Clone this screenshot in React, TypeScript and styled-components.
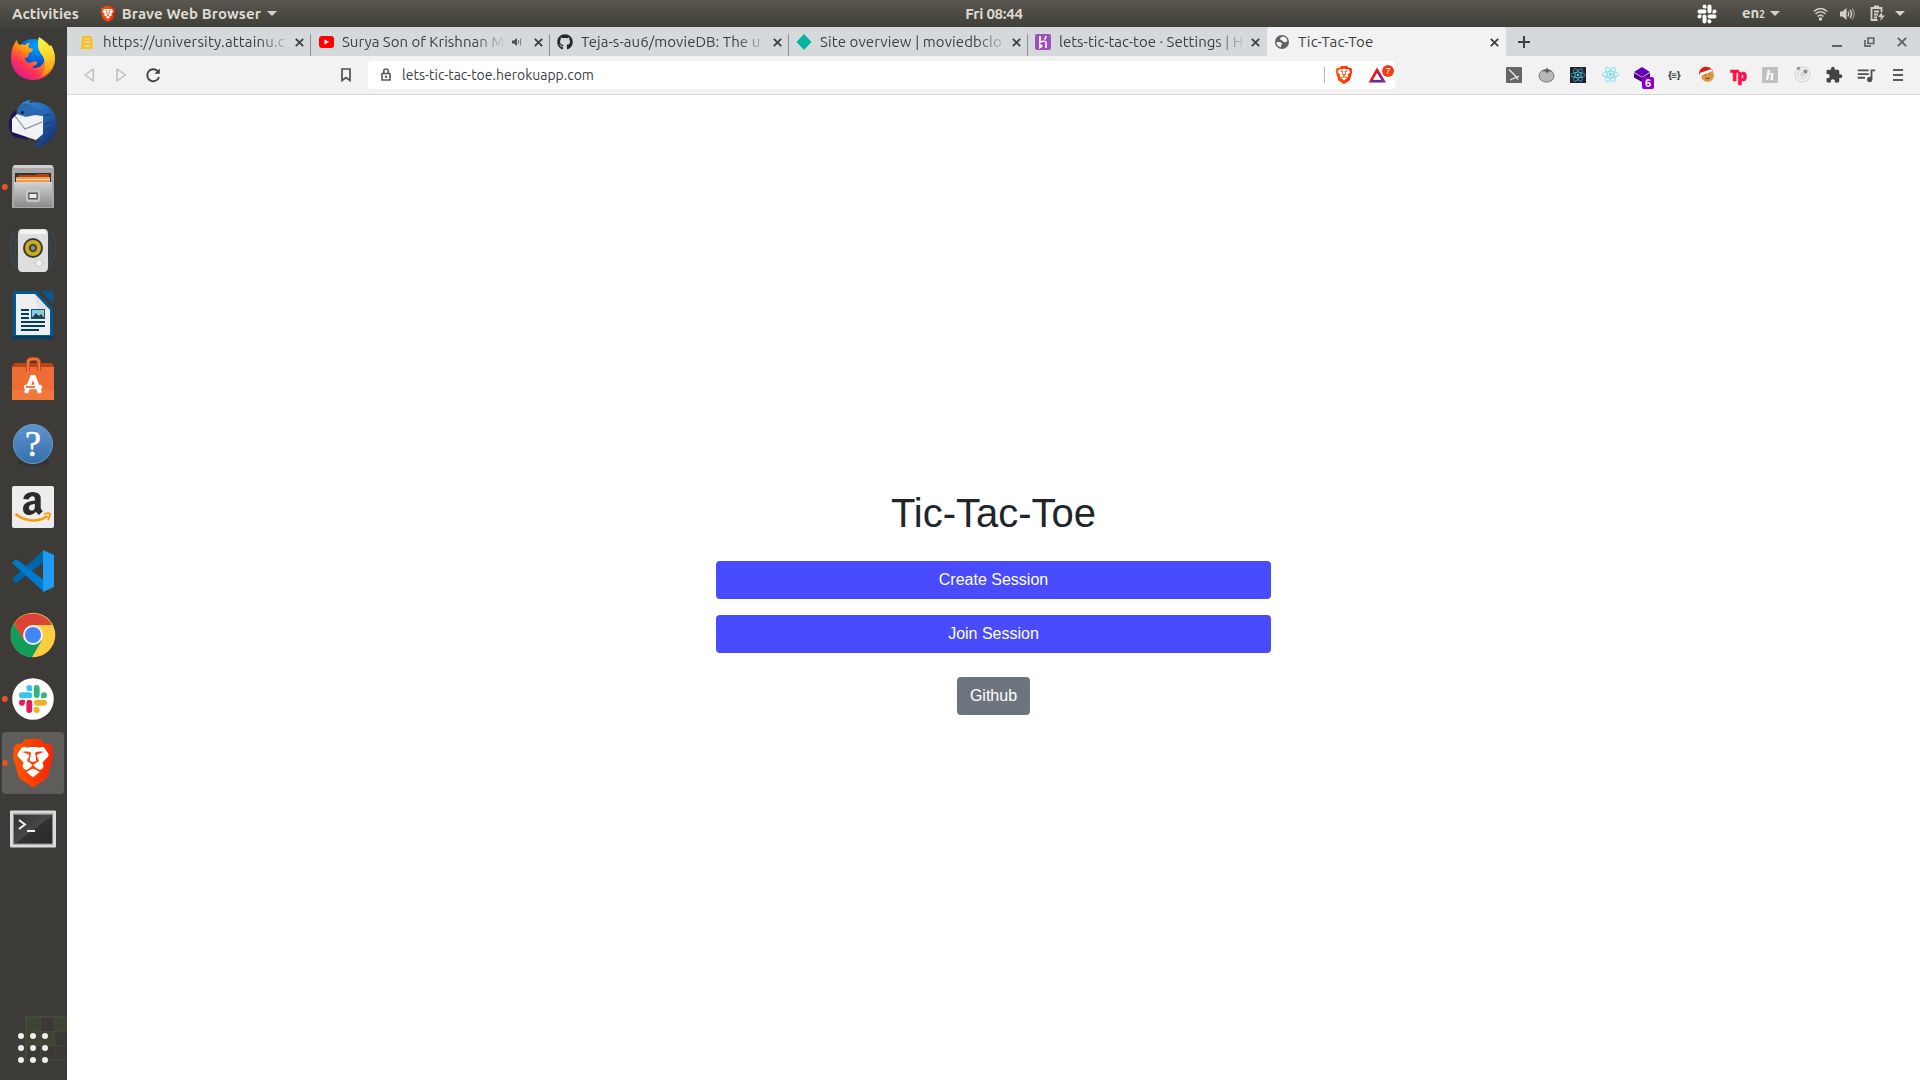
import React from "react";
import styled, { createGlobalStyle } from "styled-components";
import { FaGithub, FaReact, FaAmazon } from "react-icons/fa";
import { SiBrave } from "react-icons/si";
import { MdQueueMusic, MdExtension } from "react-icons/md";

const UI_FONT = '"Ubuntu", "Noto Sans", "Open Sans", sans-serif';

const GlobalStyle = createGlobalStyle`
  * { box-sizing: border-box; }
  body { margin: 0; background: #fff; overflow: hidden; }
  svg { display: block; flex: none; }
  button { border: 0; padding: 0; background: none; font: inherit; color: inherit; }
`;

const Desktop = styled.div`
  display: grid;
  grid-template: 27px 1fr / 67px 1fr;
  width: 1920px;
  height: 1080px;
  font-family: ${UI_FONT};
`;

/* ---------- top panel ---------- */
const TopPanel = styled.header`
  grid-column: 1 / -1;
  display: grid;
  grid-template-columns: 1fr auto 1fr;
  align-items: center;
  background: linear-gradient(#59564e, #403f3a);
  color: #dfdbd2;
  font-size: 15px;
  font-weight: 700;
  line-height: 26px;
  white-space: nowrap;
`;

const PanelGroup = styled.div`
  display: flex;
  align-items: center;
  height: 27px;
`;

const PanelText = styled.span<{ $spacing?: number; $left?: number }>`
  letter-spacing: ${(p) => p.$spacing ?? 0}px;
  margin-left: ${(p) => p.$left ?? 0}px;
`;

const PanelIcon = styled.span<{ $left: number }>`
  display: flex;
  margin-left: ${(p) => p.$left}px;
`;

const LayoutIndex = styled.span`
  font-size: 10px;
`;

const Clock = styled.time`
  letter-spacing: -0.25px;
  transform: translateX(34px);
`;

const Caret = styled.i<{ $left: number }>`
  margin-left: ${(p) => p.$left}px;
  border: 5px solid transparent;
  border-top-color: #d5d1c9;
  border-bottom: 0;
`;

const Tray = styled(PanelGroup)`
  justify-content: flex-end;
  padding-right: 15px;
`;

/* ---------- dock ---------- */
const Dock = styled.nav`
  display: flex;
  flex-direction: column;
  background: #3c3b37;
  overflow: hidden;
`;

const DockItem = styled.div<{ $active?: boolean }>`
  flex: none;
  width: 67px;
  height: 64px;
  background: ${(p) => (p.$active ? "#5f5d5a" : "none")};
  clip-path: ${(p) => (p.$active ? "inset(1px 3px 1px 2px round 4px)" : "none")};
`;

const AppsButton = styled.div`
  margin-top: auto;
  height: 80px;
`;

/* ---------- browser ---------- */
const Browser = styled.main`
  display: flex;
  flex-direction: column;
  min-width: 0;
`;

const TabStrip = styled.div`
  display: flex;
  height: 29px;
  padding-left: 5px;
  background: #d5d9dc;
`;

const TabBox = styled.div<{ $active?: boolean; $line: boolean }>`
  display: flex;
  align-items: center;
  width: 239px;
  padding: 1px 7px 0 7px;
  border-radius: 4px 4px 0 0;
  background: ${(p) =>
    p.$active
      ? "#f2f2f2"
      : p.$line
      ? "linear-gradient(#8d9194, #8d9194) right bottom / 1px 22px no-repeat"
      : "none"};
`;

const Favicon = styled.span`
  display: flex;
  justify-content: center;
  width: 16px;
  margin-right: 8px;
`;

const TabTitle = styled.span<{ $spacing: number; $fade: boolean }>`
  flex: 1;
  min-width: 0;
  white-space: nowrap;
  font-size: 15px;
  line-height: 22px;
  letter-spacing: ${(p) => p.$spacing}px;
  color: #3c4043;
  mask-image: ${(p) => (p.$fade ? "linear-gradient(90deg, #000 calc(100% - 32px), transparent)" : "none")};
`;

const CloseBox = styled.button`
  display: flex;
  margin-left: 4px;
`;

const AudioBox = styled.span`
  display: flex;
  margin: 0 8px 0 6px;
`;

const NewTab = styled.button`
  display: flex;
  align-items: center;
  margin-left: 12px;
`;

const WindowButtons = styled.div`
  display: flex;
  align-items: center;
  gap: 22px;
  margin-left: auto;
  padding-right: 13px;
`;

const Toolbar = styled.div`
  display: flex;
  align-items: center;
  height: 39px;
  padding: 0 12px 1px 14px;
  background: #f2f2f2;
  border-bottom: 1px solid #d6d7d8;
`;

const NavButtons = styled.div`
  display: flex;
  gap: 16px;
`;

const BookmarkButton = styled.button`
  display: flex;
  margin: 0 17px 0 180px;
`;

const AddressBar = styled.div`
  display: flex;
  align-items: center;
  width: 1027px;
  height: 28px;
  padding: 0 1px 0 10px;
  border-radius: 4px;
  background: #fff;
`;

const Url = styled.span`
  flex: 1;
  margin-left: 8px;
  font-size: 14px;
  line-height: 28px;
  color: #3c4043;
`;

const Divider = styled.i`
  width: 1px;
  height: 16px;
  margin-right: 11px;
  background: #b5b5b5;
`;

const Rewards = styled.span`
  position: relative;
  display: flex;
  width: 26px;
  height: 18px;
  margin-left: 16px;
`;

const RewardsBadge = styled.b`
  position: absolute;
  right: 0;
  top: -1px;
  width: 12px;
  height: 12px;
  border-radius: 6px;
  background: #fb3a17;
  color: #fff;
  font: 9px/12px "Liberation Sans", sans-serif;
  text-align: center;
`;

const Extensions = styled.div`
  display: flex;
  gap: 12px;
  margin-left: auto;
`;

const ExtBox = styled.span`
  position: relative;
  display: flex;
  align-items: center;
  justify-content: center;
  width: 20px;
  height: 20px;
`;

const ExtBadge = styled.b`
  position: absolute;
  left: 10px;
  top: 12px;
  width: 12px;
  height: 12px;
  border-radius: 2px;
  background: #8b00c9;
  color: #fff;
  font: 700 11px/12px "Liberation Sans", sans-serif;
  text-align: center;
`;

const BraceText = styled.b`
  font: 700 10px/12px "Noto Sans", sans-serif;
  letter-spacing: -0.5px;
  color: #333;
`;

const TpText = styled.b`
  font: 800 15px/16px "Open Sans", "Noto Sans", sans-serif;
  letter-spacing: -1.5px;
  color: #ff0e47;
  -webkit-text-stroke: 0.6px #ff0e47;
`;

const HoneyBox = styled.b`
  width: 16px;
  height: 16px;
  border-radius: 1px;
  background: #bfbfbf;
  color: #fff;
  font: italic 700 15px/16px "Liberation Serif", serif;
  text-align: center;
`;

/* ---------- page ---------- */
const Page = styled.section`
  flex: 1;
  display: flex;
  flex-direction: column;
  align-items: center;
  justify-content: center;
  padding-top: 28px;
  background: #fff;
  font-family: "Liberation Sans", Arial, sans-serif;
  color: #212529;
`;

const Heading = styled.h1`
  margin: 0 0 24px;
  font-size: 40px;
  font-weight: 400;
  line-height: 48px;
`;

const PageButton = styled.button<{ $wide?: boolean; $gap: number }>`
  width: ${(p) => (p.$wide ? "555px" : "auto")};
  height: 38px;
  margin-bottom: ${(p) => p.$gap}px;
  padding: 0 13px;
  border-radius: 4px;
  background: ${(p) => (p.$wide ? "#494bff" : "#6c757d")};
  color: #fff;
  font-size: 16px;
  line-height: 38px;
`;

/* ---------- shared drawings ---------- */
const Cross = ({ size = 9, color = "#3c4043", weight = 1.8 }) => (
  <svg width={size} height={size} viewBox="0 0 9 9">
    <path d="M.8.8l7.4 7.4M8.2.8L.8 8.2" stroke={color} strokeWidth={weight} />
  </svg>
);

/* Four-arm hash mark; arms take four brand colours or a single one. */
const SlackMark = ({ size, colors }: { size: number; colors: string[] }) => (
  <g transform={`scale(${size / 24})`}>
    <path fill={colors[0]} d="M5.04 15.16a2.53 2.53 0 1 1-2.52-2.52h2.52zm1.27 0a2.52 2.52 0 0 1 5.04 0v6.32a2.52 2.52 0 0 1-5.04 0z" />
    <path fill={colors[1]} d="M8.83 5.04a2.52 2.52 0 1 1 2.52-2.52v2.52zm0 1.27a2.52 2.52 0 0 1 0 5.05H2.52a2.52 2.52 0 0 1 0-5.05z" />
    <path fill={colors[2]} d="M18.96 8.83a2.52 2.52 0 1 1 2.52 2.53h-2.52zm-1.27 0a2.53 2.53 0 0 1-5.05 0V2.52a2.52 2.52 0 0 1 5.05 0z" />
    <path fill={colors[3]} d="M15.17 18.96a2.52 2.52 0 1 1-2.53 2.52v-2.52zm0-1.27a2.53 2.53 0 0 1 0-5.05h6.31a2.52 2.52 0 0 1 0 5.05z" />
  </g>
);

const Lion = ({ width, height }: { width: number; height: number }) => (
  <svg width={width} height={height} viewBox="0 0 20 24" preserveAspectRatio="none">
    <defs>
      <linearGradient id="lionFill">
        <stop offset="0" stopColor="#ff5500" />
        <stop offset=".5" stopColor="#ff4000" />
        <stop offset="1" stopColor="#ff2000" />
      </linearGradient>
    </defs>
    <path fill="#fff" d="M4 4h12l2 4-3 11-5 3.500L5 19 2 8z" />
    <SiBrave x={-2} y={0} size={24} fill="url(#lionFill)" />
  </svg>
);

const DockSvg = ({ running, children }: { running?: boolean; children: React.ReactNode }) => (
  <svg width="67" height="64" viewBox="0 0 67 64">
    {running && <circle cx="4.8" cy="32" r="3" fill="#e95420" />}
    {children}
  </svg>
);

const Firefox = () => (
  <DockSvg>
    <defs>
      <linearGradient id="ffBody" x1=".8" y1=".1" x2=".2" y2=".9">
        <stop offset="0" stopColor="#fff23a" /><stop offset=".4" stopColor="#ff980e" />
        <stop offset=".7" stopColor="#ff3750" /><stop offset="1" stopColor="#e01a8c" />
      </linearGradient>
      <linearGradient id="ffTail" x1=".4" y1="0" x2=".5" y2="1">
        <stop offset="0" stopColor="#fff44f" /><stop offset=".4" stopColor="#ffdd2e" /><stop offset="1" stopColor="#ff8a12" />
      </linearGradient>
      <radialGradient id="ffGlobe" cx=".6" cy=".2" r=".9">
        <stop offset="0" stopColor="#00a5ff" /><stop offset=".5" stopColor="#0460dd" /><stop offset="1" stopColor="#321b7a" />
      </radialGradient>
    </defs>
    <circle cx="33" cy="29" r="17" fill="url(#ffGlobe)" />
    <path fill="url(#ffBody)" d="M15 16c0-1 1-2 2-3 0 3 1 4 3 5 2-1 4 0 5 0 2-2 4-2 5-2-2 2-2 4-1 5l4 1c0 2-2 3-4 4-1 2 0 3-1 4l-3 1c0 4 4 6 7 4 3-1 5-1 5 1-1 3-4 3-5 4 5 3 13-2 13-9 0-4-1-6-2-7l8-6c4 7 5 14 3 20-3 9-11 15-21 15-12 0-22-9-22-22 0-6 1-11 4-15z" />
    <path fill="url(#ffTail)" d="M39 10c6 4 13 9 15 17 2 12-5 20-14 23 5-5 6-12 4-18-1-4-6-7-6-14 0-3 0-5 1-8z" />
  </DockSvg>
);

const Thunderbird = () => (
  <DockSvg>
    <defs>
      <linearGradient id="tbBird" x2=".9" y2="1">
        <stop offset="0" stopColor="#3c8ee0" /><stop offset=".5" stopColor="#2369b9" /><stop offset="1" stopColor="#142766" />
      </linearGradient>
    </defs>
    <path fill="#201657" d="M15 19c-5 6-8 12-5 20 1 5 4 8 9 8l9 2-7-16z" />
    <path fill="url(#tbBird)" d="M18 17c3-5 8-8 13-8l-2 3c13-3 24 4 27 15 3 12-3 25-17 29l-6-1 7-5-15-20-8-8z" />
    <path fill="#f1f2f5" d="M12 28l6-6 25 1 0 20-7 6-24-8z" />
    <path d="M15 25l10 13 17-7" fill="none" stroke="#858b9a" strokeWidth="1.1" />
    <path fill="#2a67ae" d="M17 19c3-8 13-8 16-3 5 4 13 3 16 10l-14-2-9 2-9-3z" />
    <circle cx="22.500" cy="21.500" r="1.600" fill="#151b35" />
    <path d="M44 25l7-2m-7 10l10-3m-10 10l10-4m-13 11l10-4" stroke="#1b447f" strokeWidth="1.500" />
  </DockSvg>
);

const Files = () => (
  <DockSvg running>
    <defs>
      <linearGradient id="cabinet" x2="0" y2="1"><stop stopColor="#d2d2d2" /><stop offset="1" stopColor="#8c8c8c" /></linearGradient>
    </defs>
    <path fill="#a9a9a9" d="M15 10h36q2 0 3 4v38q0 1-1 1H13q-1 0-1-1V14q1-4 3-4z" />
    <path fill="#d0d0d0" d="M15 10h36q2 0 2 3H13q0-3 2-3z" />
    <path fill="#35312e" d="M15 18h36v10H15z" />
    <path fill="#b7410e" d="M18 20h17l2-1h12v5H18z" />
    <path fill="#f59b47" d="M16 22h34v6H16z" /><path fill="#ffe8c7" d="M16 24h34v1H16z" />
    <path fill="url(#cabinet)" d="M14 27h38v25H14z" />
    <rect x="27" y="36" width="12" height="10" rx="2" fill="#8e8e8e" stroke="#d4d4d4" strokeWidth="1.5" />
    <rect x="29" y="38.500" width="8" height="5" fill="#ececec" stroke="#555" />
  </DockSvg>
);

const Rhythmbox = () => (
  <DockSvg>
    <g fill="none" stroke="#3a4550" strokeWidth="2">
      <path d="M15 12q-10 19 2 38M51 12q10 19-2 38M18 17q-6 15 0 29M48 17q6 15 0 29" />
    </g>
    <path fill="#dedede" d="M22 10h22q4 0 4 5v33q0 5-4 5H22q-4 0-4-5V15q0-5 4-5z" />
    <path fill="#f4f4f4" d="M23 11h20q3 0 3 4H20q0-4 3-4z" />
    <circle cx="33" cy="29" r="10" fill="#383838" /><circle cx="33" cy="29" r="8" fill="#cfae1c" />
    <circle cx="33" cy="29" r="4.200" fill="#4b4738" /><circle cx="33" cy="29" r="2.200" fill="#7690a2" />
    <circle cx="39" cy="44" r="3.500" fill="#f2f2f2" stroke="#c8c8c8" />
  </DockSvg>
);

const Writer = () => (
  <DockSvg>
    <path fill="#015a94" d="M14 8h22l17 18v28q0 2-2 2H15q-2 0-2-2V10q0-2 1-2zM41 8h11q1 0 1 1v12z" />
    <path fill="#023f65" d="M13 53h40v1q0 2-2 2H15q-2 0-2-2z" />
    <path fill="#eee" d="M16 11h19l15 16v25H16z" /><path fill="#cfd3d6" d="M35 11l15 16H38z" opacity=".45" />
    <path fill="#053d60" d="M21 26h8v2h-8zm0 4h8v2h-8zm0 4h8v2h-8zm0 4h24v2H21zm0 4h24v2H21zm0 4h18v2H21z" />
    <path fill="#075988" d="M31 26h14v10H31z" /><path fill="#83cce9" d="M32 27h12v7H32z" />
    <path fill="#283d48" d="M32 35l4-5 3 3 2-2 3 4z" /><path fill="#f5cf32" d="M41 27h3v3z" />
  </DockSvg>
);

const Software = () => (
  <DockSvg>
    <path fill="#b84418" d="M14 16h38l2 4H12z" />
    <path fill="#ef6c35" d="M12 20h42v33H12z" /><path fill="#f5803f" d="M12 43h42v10H12z" opacity=".6" />
    <path d="M28 24v-8q0-4 4-4h3q4 0 4 4v8" fill="none" stroke="#c84a1a" strokeWidth="4" />
    <path d="M28 24v-8q0-4 4-4h3q4 0 4 4v8" fill="none" stroke="#ef7440" strokeWidth="2" />
    <path d="M26 46l6-16h2l6 16" fill="none" stroke="#fff" strokeWidth="4" />
    <path d="M26 40h14" stroke="#fff" strokeWidth="4.500" strokeLinecap="round" /><path d="M26 40h9" stroke="#f26a30" strokeWidth="1.800" />
  </DockSvg>
);

const HelpMark = styled.text`
  font: 36px "Liberation Serif", serif;
  fill: #fff;
  stroke: #fff;
  stroke-width: 0.5px;
  text-anchor: middle;
`;

const Help = () => (
  <DockSvg>
    <defs><linearGradient id="help" x2="0" y2="1"><stop stopColor="#6093ce" /><stop offset="1" stopColor="#3470ac" /></linearGradient></defs>
    <ellipse cx="33" cy="51" rx="16" ry="4" fill="#2c2b28" opacity=".5" />
    <circle cx="33" cy="33" r="19.500" fill="url(#help)" stroke="#6e9bd0" />
    <HelpMark x="33" y="45">?</HelpMark>
  </DockSvg>
);

const Amazon = () => (
  <DockSvg>
    <rect x="12" y="11" width="42" height="42" rx="2" fill="#ededed" />
    <svg x="23" y="17" width="20" height="23" viewBox="88 32 286 340" preserveAspectRatio="none">
      <FaAmazon x={-32} y={0} size={512} fill="#2b2b2b" />
    </svg>
    <path d="M15.500 39c10 8 23 8.500 32 2" fill="none" stroke="#ff9900" strokeWidth="2.600" />
    <path d="M44 39q4-1.500 6-.5 0 3-2 6.500" fill="none" stroke="#ff9900" strokeWidth="1.700" />
  </DockSvg>
);

const VsCode = () => (
  <DockSvg>
    <path fill="#0065a9" d="M12 40l4 4 28-21V11z" />
    <path fill="#007acc" d="M12 24l4-4 28 21v12z" />
    <path fill="#1f9cf0" d="M43 11l11 5v32l-11 5z" />
  </DockSvg>
);

const Chrome = () => (
  <DockSvg>
    <circle cx="33" cy="32" r="22.300" fill="#ffcd40" />
    <path fill="#db4437" d="M33 32L14 20.500A22.300 22.300 0 0 1 52.200 22H33z" />
    <path fill="#0f9d58" d="M14 20.500a22.300 22.300 0 0 0 18 33.800L42 37l-9-5-9 5z" />
    <path fill="#db4437" d="M14 20.500L23.500 37 33 22z" />
    <circle cx="33" cy="32" r="10" fill="#f1f1f1" /><circle cx="33" cy="32" r="8" fill="#4285f4" />
  </DockSvg>
);

const Slack = () => (
  <DockSvg running>
    <circle cx="33" cy="32" r="20.800" fill="#fff" />
    <g transform="translate(19 18)"><SlackMark size={28} colors={["#e01e5a", "#36c5f0", "#2eb67d", "#ecb22e"]} /></g>
  </DockSvg>
);

const Brave = () => (
  <DockSvg running>
    <svg x="13" y="8" width="40" height="48"><Lion width={40} height={48} /></svg>
  </DockSvg>
);

const Terminal = () => (
  <DockSvg>
    <defs><linearGradient id="term" x2="1" y2="1"><stop stopColor="#333" /><stop offset=".5" stopColor="#484848" /><stop offset=".52" stopColor="#323232" /><stop offset="1" stopColor="#292929" /></linearGradient></defs>
    <rect x="10" y="15.500" width="46" height="37" rx="1" fill="#dadada" />
    <rect x="13" y="18.500" width="40" height="31" fill="#888" /><rect x="14" y="20" width="38" height="28.500" fill="url(#term)" />
    <path d="M19 25l6 4.500-6 4.500M27 36h8" fill="none" stroke="#f2f2f2" strokeWidth="2" />
  </DockSvg>
);

const AppsGrid = () => (
  <svg width="67" height="80" viewBox="0 1000 67 80">
    <path fill="#474742" d="M25 1016h42v44H25z" />
    {[0, 1, 2].map((r) =>
      [0, 1, 2].map((c) => (
        <rect key={`${r}${c}`} x={27 + c * 14} y={1018 + r * 14} width="13" height="13" fill={(r === 0 && c !== 1) || (r === 1 && c < 2) ? "#3e4434" : "#3b3935"} />
      ))
    )}
    {[0, 1, 2].map((r) => [0, 1, 2].map((c) => <circle key={`${r}${c}`} cx={21 + c * 12} cy={1036 + r * 12} r="3" fill="#eeeeec" />))}
  </svg>
);

const dockApps = [Firefox, Thunderbird, Files, Rhythmbox, Writer, Software, Help, Amazon, VsCode, Chrome, Slack, Brave, Terminal];

const Ladder = () => (
  <svg width="12" height="13" viewBox="0 0 12 13" fill="none" stroke="#fbbf12" strokeWidth="2.200">
    <path d="M2.500 0L1 13M9.500 0L11 13M2 1h8M2 4.500h8M1 8h10M1 11.700h10" />
  </svg>
);

const YouTube = () => (
  <svg width="15" height="12" viewBox="0 0 15 12"><rect width="15" height="12" rx="3" fill="#f00" /><path d="M5.500 3.500v5L10 6z" fill="#fff" /></svg>
);

const Diamond = () => (
  <svg width="16" height="16" viewBox="0 0 16 16"><path d="M8 0l7.500 8L8 16 .5 8z" fill="#00b5a1" /></svg>
);

const HerokuTile = () => (
  <svg width="16" height="16" viewBox="0 0 16 16">
    <rect width="16" height="16" rx="2" fill="#9b51b5" />
    <path d="M5 2v6q6-2 6 1v5M5 10.500v3L6.800 12zM11 2q0 2-1.500 3.500" fill="none" stroke="#fff" strokeWidth="1.600" />
  </svg>
);

const Globe = () => (
  <svg width="14" height="14" viewBox="0 0 14 14">
    <circle cx="7" cy="7" r="7" fill="#5f6368" />
    <path fill="#f2f2f2" d="M8.500 1.600c-2.300.3-3.800 1.400-3.300 2.900.8.900 2.300.3 2.400 1.500.1 1 1.700.7 2.400 1.500L12.400 6A5.600 5.600 0 0 0 8.500 1.600zM1.500 7c2 0 4.500-.2 5.400 1.400.5 1.200-.8 1.300-.8 2.200 0 .8-.1 1.400-.5 1.700A5.600 5.600 0 0 1 1.500 7z" />
  </svg>
);

const Speaker = () => (
  <svg width="10" height="10" viewBox="0 0 10 10"><path d="M0 3.500h2L5 1v8L2 6.500H0z" fill="#4d5154" /><path d="M6.500 3v4M8.700 1.500v7" stroke="#777b7e" /></svg>
);

const tabs = [
  { title: "https://university.attainu.c", icon: <Ladder />, spacing: 0.15 },
  { title: "Surya Son of Krishnan M", icon: <YouTube />, spacing: 0 },
  { title: "Teja-s-au6/movieDB: The u", icon: <FaGithub size={16} color="#24292e" />, spacing: 0.05 },
  { title: "Site overview | moviedbclo", icon: <Diamond />, spacing: 0.1 },
  { title: "lets-tic-tac-toe · Settings | H", icon: <HerokuTile />, spacing: 0 },
  { title: "Tic-Tac-Toe", icon: <Globe />, spacing: 0.2 },
];
const AUDIO_TAB = 1;
const ACTIVE_TAB = 5;

const Tomato = () => (
  <svg width="17" height="17" viewBox="0 0 17 17">
    <ellipse cx="8.500" cy="9.800" rx="7.500" ry="6.300" fill="#b8b8b8" stroke="#777" /><path d="M3 5l5-1 1-3 1 3 4 1-4 .7L9 8 8 5.500z" fill="#555" />
  </svg>
);
const Pen = () => (
  <svg width="16" height="16" viewBox="0 0 16 16"><rect width="16" height="16" rx="1" fill="#666" /><path d="M3 2.500l6 6 3 4M13 9l-9 4" stroke="#eee" strokeWidth="1.300" fill="none" /></svg>
);
const ReactTile = () => (
  <svg width="16" height="16" viewBox="0 0 16 16"><path fill="#20232a" d="M0 0h16v16H0z" /><FaReact x={0.5} y={0.5} size={15} fill="#4cc6ee" /></svg>
);
const Layers = () => (
  <svg width="16" height="16" viewBox="0 0 16 16"><path fill="#6500b5" d="M8 0l8 5-8 5-8-5z" /><path fill="#4b0088" d="M0 6l8 4.500L16 6v4.500L8 15 0 10.500z" /></svg>
);
const Cookie = () => (
  <svg width="17" height="17" viewBox="0 0 17 17">
    <circle cx="9.500" cy="9.500" r="6.500" fill="#df9843" /><path d="M1 9C1 4 4 0 9 1c3 0 5 2 6 4L3 8z" fill="#df1818" />
    <path d="M3 8l10-3.500" stroke="#fff" strokeWidth="2.400" strokeLinecap="round" /><circle cx="2" cy="10" r="1.700" fill="#eee" />
    <path d="M7 9h1M11 8h1M7.500 12.500q2.500 1 4.500-1" stroke="#77441d" fill="none" />
  </svg>
);
const Orbit = () => (
  <svg width="17" height="17" viewBox="0 0 17 17" fill="none" stroke="#d0d0d0"><circle cx="8.500" cy="8.500" r="7.500" /><circle cx="8.500" cy="8.500" r="4.500" /><circle cx="8.500" cy="8.500" r="2" fill="#ddd" /><circle cx="4.500" cy="2.500" r="1.700" fill="#999" stroke="none" /><circle cx="11.500" cy="5.500" r="2" fill="#888" stroke="none" /></svg>
);
const MenuLines = () => (
  <svg width="10" height="12" viewBox="0 0 10 12"><path d="M0 1h10M0 6h10M0 11h10" stroke="#5a5a5a" strokeWidth="2" /></svg>
);

const extensions = [
  <Pen />, <Tomato />, <ReactTile />, <FaReact size={17} color="#61dafb" />,
  <><Layers /><ExtBadge>6</ExtBadge></>,
  <BraceText>{"{≡}"}</BraceText>, <Cookie />, <TpText>Tp</TpText>, <HoneyBox>h</HoneyBox>, <Orbit />,
  <MdExtension size={18} color="#444" />, <MdQueueMusic size={22} color="#505050" />, <MenuLines />,
];

export default function App() {
  return (
    <Desktop>
      <GlobalStyle />
      <TopPanel>
        <PanelGroup>
          <PanelText $left={12}>Activities</PanelText>
          <PanelIcon $left={22}><Lion width={14} height={16} /></PanelIcon>
          <PanelText $left={7} $spacing={0.1}>Brave Web Browser</PanelText>
          <Caret $left={6} />
        </PanelGroup>
        <Clock>Fri 08:44</Clock>
        <Tray>
          <svg width="20" height="20" viewBox="-.5 -.5 20 20"><SlackMark size={19} colors={["#fff", "#fff", "#fff", "#fff"]} /></svg>
          <PanelText $left={25}>en<LayoutIndex>2</LayoutIndex></PanelText>
          <Caret $left={5} />
          <PanelIcon $left={33}>
            <svg width="15" height="14" viewBox="0 0 15 14" fill="none" stroke="#d5d1c9" strokeWidth="1.600">
              <path d="M.8 4.500q6.700-6 13.400 0" /><path d="M2.500 7q5-4.500 10 0" opacity=".9" /><path d="M4.500 9.500q3-2.500 6 0" /><circle cx="7.500" cy="12" r="1.800" fill="#d5d1c9" stroke="none" />
            </svg>
          </PanelIcon>
          <PanelIcon $left={12}>
            <svg width="16" height="14" viewBox="0 0 16 14" fill="none" stroke="#d5d1c9" strokeWidth="1.400">
              <path d="M0 4.500h2.500L6.500 1v12L2.500 9.500H0z" fill="#d5d1c9" stroke="none" /><path d="M8 4.500q1.500 2.500 0 5M10 3q3 4 0 8" /><path d="M12 1.500q4.500 5.500 0 11" opacity=".5" />
            </svg>
          </PanelIcon>
          <PanelIcon $left={14}>
            <svg width="15" height="17" viewBox="0 0 15 17" fill="none" stroke="#d5d1c9" strokeWidth="1.800">
              <path d="M11.500 7V3H1.500v12h6M4 1.500h5M4 6.500h5M4 9.500h4M4 12.500h3" /><path d="M12 7l-4 5h3l-1 4 5-5.500h-3z" fill="#d5d1c9" stroke="none" />
            </svg>
          </PanelIcon>
          <Caret $left={10} />
        </Tray>
      </TopPanel>

      <Dock>
        {dockApps.map((Icon, i) => (
          <DockItem key={i} $active={Icon === Brave}><Icon /></DockItem>
        ))}
        <AppsButton><AppsGrid /></AppsButton>
      </Dock>

      <Browser>
        <TabStrip>
          {tabs.map((t, i) => (
            <TabBox key={t.title} $active={i === ACTIVE_TAB} $line={i < 4}>
              <Favicon>{t.icon}</Favicon>
              <TabTitle $spacing={t.spacing} $fade={i !== ACTIVE_TAB}>{t.title}</TabTitle>
              {i === AUDIO_TAB && <AudioBox><Speaker /></AudioBox>}
              <CloseBox><Cross /></CloseBox>
            </TabBox>
          ))}
          <NewTab>
            <svg width="12" height="12" viewBox="0 0 12 12"><path d="M6 0v12M0 6h12" stroke="#3c4043" strokeWidth="2" /></svg>
          </NewTab>
          <WindowButtons>
            <svg width="10" height="10" viewBox="0 0 10 10"><path d="M0 9h10" stroke="#5f6368" strokeWidth="2" /></svg>
            <svg width="11" height="10" viewBox="0 0 11 10" fill="none" stroke="#5f6368" strokeWidth="1.700"><path d="M4 1h5.700v5.500H4zM1 3v6.200h6" /></svg>
            <Cross size={10} color="#5f6368" />
          </WindowButtons>
        </TabStrip>

        <Toolbar>
          <NavButtons>
            <svg width="16" height="16" viewBox="0 0 16 16"><path d="M12.300 2v12L4 8z" fill="none" stroke="#bdbdbd" strokeWidth="1.500" strokeLinejoin="round" /></svg>
            <svg width="16" height="16" viewBox="0 0 16 16"><path d="M4 2v12L12.500 8z" fill="none" stroke="#bdbdbd" strokeWidth="1.500" strokeLinejoin="round" /></svg>
            <svg width="16" height="16" viewBox="0 0 16 16"><path d="M12.500 4A6 6 0 1 0 14 10" fill="none" stroke="#3f3f3f" strokeWidth="1.800" /><path d="M14.800 1.500v5.200H9.500z" fill="#3f3f3f" /></svg>
          </NavButtons>
          <BookmarkButton>
            <svg width="10" height="14" viewBox="0 0 10 14"><path d="M1 1h8v11.500L5 9.500l-4 3z" fill="none" stroke="#505050" strokeWidth="1.700" /></svg>
          </BookmarkButton>
          <AddressBar>
            <svg width="16" height="14" viewBox="-3 0 16 14"><path d="M1 5.500h8V12H1zM2.800 5V3q0-2 2.200-2t2.200 2v2" fill="none" stroke="#5a5a5a" strokeWidth="1.600" /><circle cx="5" cy="8.800" r="1.200" fill="#5a5a5a" /></svg>
            <Url>lets-tic-tac-toe.herokuapp.com</Url>
            <Divider />
            <Lion width={16} height={18} />
            <Rewards>
              <svg width="19" height="18" viewBox="0 0 19 18">
                <path fill="#ff1300" d="M9 1.500v6L5 14l-4.500 2.500z" /><path fill="#9e1f63" d="M9 1.500l9 15-5-2.800L9 7.500z" /><path fill="#662d91" d="M.5 16.500L5 13.500h8l5 3z" /><path fill="#fff" d="M9 7l4 6.800H5z" />
              </svg>
              <RewardsBadge>7</RewardsBadge>
            </Rewards>
          </AddressBar>
          <Extensions>
            {extensions.map((icon, i) => <ExtBox key={i}>{icon}</ExtBox>)}
          </Extensions>
        </Toolbar>

        <Page>
          <Heading>Tic-Tac-Toe</Heading>
          <PageButton $wide $gap={16}>Create Session</PageButton>
          <PageButton $wide $gap={24}>Join Session</PageButton>
          <PageButton $gap={0}>Github</PageButton>
        </Page>
      </Browser>
    </Desktop>
  );
}
